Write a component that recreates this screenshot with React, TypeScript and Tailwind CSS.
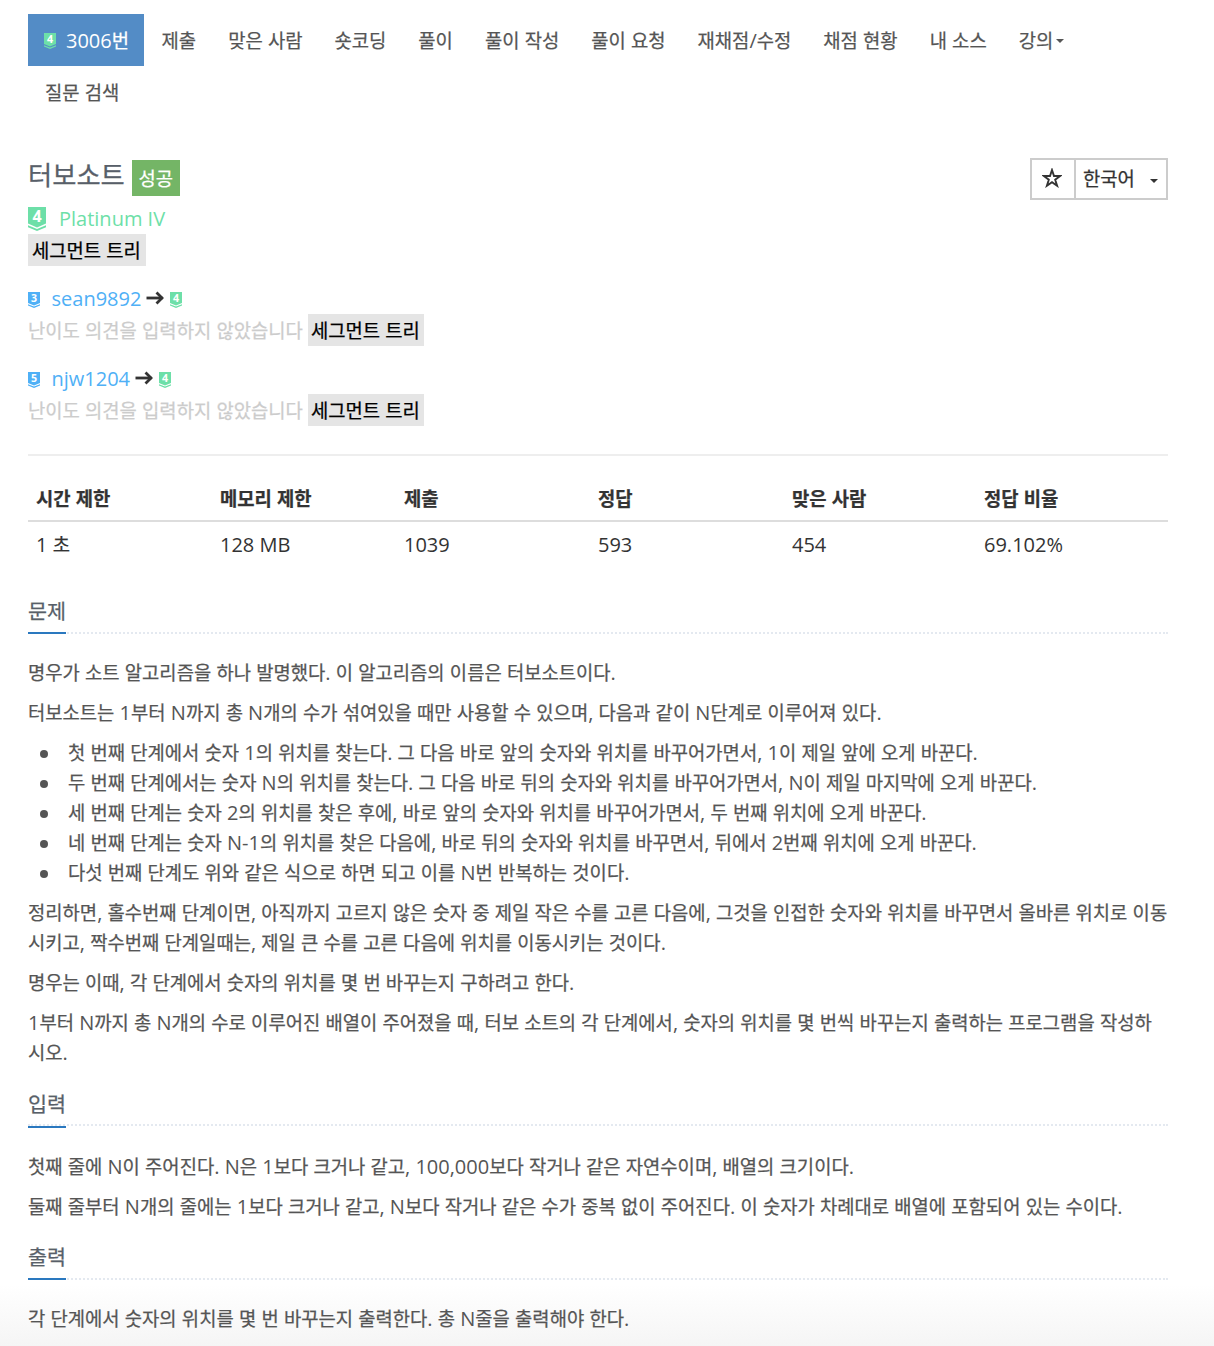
import { Fragment, type ReactNode } from 'react';

const NAV_ITEMS = [
  '제출',
  '맞은 사람',
  '숏코딩',
  '풀이',
  '풀이 작성',
  '풀이 요청',
  '재채점/수정',
  '채점 현황',
  '내 소스',
];

const STATS = [
  { label: '시간 제한', value: '1 초', width: 'w-[184px]' },
  { label: '메모리 제한', value: '128 MB', width: 'w-[184px]' },
  { label: '제출', value: '1039', width: 'w-[194px]' },
  { label: '정답', value: '593', width: 'w-[194px]' },
  { label: '맞은 사람', value: '454', width: 'w-[192px]' },
  { label: '정답 비율', value: '69.102%', width: 'w-[192px]' },
];

const OPINIONS = [
  { user: 'sean9892', level: 3 },
  { user: 'njw1204', level: 5 },
];

const STEPS = [
  '첫 번째 단계에서 숫자 1의 위치를 찾는다. 그 다음 바로 앞의 숫자와 위치를 바꾸어가면서, 1이 제일 앞에 오게 바꾼다.',
  '두 번째 단계에서는 숫자 N의 위치를 찾는다. 그 다음 바로 뒤의 숫자와 위치를 바꾸어가면서, N이 제일 마지막에 오게 바꾼다.',
  '세 번째 단계는 숫자 2의 위치를 찾은 후에, 바로 앞의 숫자와 위치를 바꾸어가면서, 두 번째 위치에 오게 바꾼다.',
  '네 번째 단계는 숫자 N-1의 위치를 찾은 다음에, 바로 뒤의 숫자와 위치를 바꾸면서, 뒤에서 2번째 위치에 오게 바꾼다.',
  '다섯 번째 단계도 위와 같은 식으로 하면 되고 이를 N번 반복하는 것이다.',
];

// Hangul is set a little smaller and firmer than the Latin text around it.
const Ko = ({ children }: { children: string }) => (
  <>
    {children.split(/([가-힣]+)/).map((run, i) =>
      i % 2 ? (
        <span
          key={i}
          className="font-['Noto_Sans_CJK_KR',sans-serif] text-[0.94em] leading-none [-webkit-text-stroke:0.25px_currentColor]"
        >
          {run}
        </span>
      ) : (
        <Fragment key={i}>{run}</Fragment>
      ),
    )}
  </>
);

const TierIcon = ({ level, className }: { level: number; className: string }) => (
  <svg viewBox="0 0 18 24" className={className} fill="currentColor">
    <path d="M0 0h18v16.6l-9 3.8-9-3.8z" />
    <path d="M0 18.2l9 3.7 9-3.7v2l-9 3.7-9-3.7z" />
    <text
      x="9"
      y="14.8"
      textAnchor="middle"
      className="fill-white font-['Open_Sans',sans-serif] text-[16px] leading-none font-bold"
    >
      {level}
    </text>
  </svg>
);

const Caret = ({ className }: { className: string }) => (
  <svg viewBox="0 0 8 4" className={className} fill="currentColor">
    <path d="M0 0h8L4 4z" />
  </svg>
);

const Arrow = () => (
  <svg viewBox="0 0 18 14" className="mb-0.5 ml-[5px] h-3.5 w-[18px] text-[#333]" fill="none" stroke="currentColor">
    <path d="M0.5 7h16" strokeWidth="2.8" />
    <path d="M10.5 1.5L16 7l-5.5 5.5" strokeWidth="2.8" />
  </svg>
);

const Tag = ({ className }: { className: string }) => (
  <span className={`h-8 bg-[#e5e5e5] pt-px leading-8 text-black ${className}`}>
    <Ko>세그먼트 트리</Ko>
  </span>
);

type SectionProps = {
  title: string;
  className: string;
  titleClass?: string;
  children: ReactNode;
};

const Section = ({ title, className, titleClass = '-mb-0.5 h-11', children }: SectionProps) => (
  <section className={className}>
    <div className="flex h-11 border-b-2 border-dotted border-[#e4e9f0]">
      <h2 className={`border-b-2 border-[#2a78bf] text-[22px] leading-10 text-[#585f69] ${titleClass}`}>
        <Ko>{title}</Ko>
      </h2>
    </div>
    <div className="space-y-2.5 pt-6 leading-[30px] text-[#555]">{children}</div>
  </section>
);

const P = ({ children }: { children: string }) => (
  <p>
    <Ko>{children}</Ko>
  </p>
);

export default function App() {
  return (
    <div className="h-[1346px] overflow-hidden bg-white bg-[linear-gradient(to_bottom,#fff_1285px,#f5f5f5_1346px)] pt-3.5 pl-7 font-['Open_Sans','Noto_Sans_CJK_KR',sans-serif] text-[20px] text-[#333]">
      <div className="w-[1140px]">
        <nav className="flex h-[104px] flex-wrap leading-[54px] text-[#555]">
          <a className="mr-[1.6px] flex h-[52px] w-[116px] items-center bg-[#538cc6] pl-4 text-white">
            <TierIcon level={4} className="mt-0.5 mr-2.5 h-4 w-3 text-[#6ddfa8]" />
            <span className="mt-0.5">
              <Ko>3006번</Ko>
            </span>
          </a>
          {NAV_ITEMS.map((item) => (
            <a key={item} className="h-[52px] px-4">
              <Ko>{item}</Ko>
            </a>
          ))}
          <a className="flex h-[52px] items-center px-4">
            <span className="mt-0.5">
              <Ko>강의</Ko>
            </span>
            <Caret className="mt-0.5 ml-[3px] h-1 w-2" />
          </a>
          <div className="h-[52px] w-full pl-[17px]">
            <Ko>질문 검색</Ko>
          </div>
        </nav>

        <header className="mt-10 flex h-[45px] justify-between">
          <div className="flex">
            <h1 className="mr-[7px] text-[28px] leading-8 text-[#585f69]">
              <Ko>터보소트</Ko>
            </h1>
            <span className="mt-0.5 h-9 w-12 bg-[#74b566] text-center leading-[38px] text-white">
              <Ko>성공</Ko>
            </span>
          </div>
          <div className="flex h-[42px] border-2 border-[#ccc] leading-[38px]">
            <button className="flex w-[44px] items-center justify-center border-r-2 border-[#ccc] pr-0.5 pb-0.5">
              <svg viewBox="0 0 20 20" className="size-5" fill="none" stroke="currentColor" strokeWidth="1.9">
                <path d="M10 2l2 6h6.2l-5 3.7 1.9 6-5.1-3.6-5.1 3.6 1.9-6-5-3.7H8z" />
              </svg>
            </button>
            <button className="flex w-[90px] items-center pl-[7px]">
              <span className="-mt-px">
                <Ko>한국어</Ko>
              </span>
              <Caret className="mt-[3px] ml-[15px] h-1 w-2" />
            </button>
          </div>
        </header>

        <div className="flex h-[31px] items-center leading-8 text-[#6ddfa8]">
          <TierIcon level={4} className="mt-px mr-[13px] h-6 w-[18px]" />
          Platinum IV
        </div>
        <Tag className="block w-[118px] pl-1" />

        {OPINIONS.map(({ user, level }) => (
          <div key={user} className="mt-4 h-16 leading-8">
            <div className="flex h-8 items-center pt-0.5 text-[#4fb0f6]">
              <TierIcon level={level} className="mt-0.5 mr-[11.5px] h-4 w-3" />
              {user}
              <Arrow />
              <TierIcon level={4} className="mt-0.5 ml-[5.5px] h-4 w-3 text-[#6ddfa8]" />
            </div>
            <div className="flex">
              <span className="w-[280px] pt-px text-[#ccc]">
                <Ko>난이도 의견을 입력하지 않았습니다</Ko>
              </span>
              <Tag className="w-[116px] pl-[3px]" />
            </div>
          </div>
        ))}

        <hr className="mt-7 border-t-2 border-[#eee]" />

        <table className="mt-5 w-full table-fixed text-left">
          <thead>
            <tr className="h-[45px] border-b-2 border-[#ddd]">
              {STATS.map(({ label, width }) => (
                <th key={label} className={`pt-px pl-2 font-bold ${width}`}>
                  <Ko>{label}</Ko>
                </th>
              ))}
            </tr>
          </thead>
          <tbody>
            <tr className="h-[46px]">
              {STATS.map(({ label, value }) => (
                <td key={label} className="pl-2">
                  <Ko>{value}</Ko>
                </td>
              ))}
            </tr>
          </tbody>
        </table>

        <Section title="문제" className="mt-[23px]">
          <P>명우가 소트 알고리즘을 하나 발명했다. 이 알고리즘의 이름은 터보소트이다.</P>
          <P>터보소트는 1부터 N까지 총 N개의 수가 섞여있을 때만 사용할 수 있으며, 다음과 같이 N단계로 이루어져 있다.</P>
          <ul>
            {STEPS.map((step) => (
              <li key={step} className="flex items-center whitespace-nowrap">
                <span className="mt-px mr-5 ml-3 size-2 rounded-full bg-[#555]" />
                <span>
                  <Ko>{step}</Ko>
                </span>
              </li>
            ))}
          </ul>
          <P>
            정리하면, 홀수번째 단계이면, 아직까지 고르지 않은 숫자 중 제일 작은 수를 고른 다음에, 그것을 인접한 숫자와 위치를 바꾸면서 올바른 위치로 이동시키고, 짝수번째 단계일때는, 제일 큰 수를 고른 다음에 위치를 이동시키는 것이다.
          </P>
          <P>명우는 이때, 각 단계에서 숫자의 위치를 몇 번 바꾸는지 구하려고 한다.</P>
          <P>
            1부터 N까지 총 N개의 수로 이루어진 배열이 주어졌을 때, 터보 소트의 각 단계에서, 숫자의 위치를 몇 번씩 바꾸는지 출력하는 프로그램을 작성하시오.
          </P>
        </Section>

        {/* the blue rule sits just under the dotted one here */}
        <Section title="입력" className="mt-3.5" titleClass="-mb-1 h-[46px] pt-px">
          <div className="space-y-2.5 pt-0.5">
            <P>첫째 줄에 N이 주어진다. N은 1보다 크거나 같고, 100,000보다 작거나 같은 자연수이며, 배열의 크기이다.</P>
            <P>둘째 줄부터 N개의 줄에는 1보다 크거나 같고, N보다 작거나 같은 수가 중복 없이 주어진다. 이 숫자가 차례대로 배열에 포함되어 있는 수이다.</P>
          </div>
        </Section>

        <Section title="출력" className="mt-3.5">
          <P>각 단계에서 숫자의 위치를 몇 번 바꾸는지 출력한다. 총 N줄을 출력해야 한다.</P>
        </Section>
      </div>
    </div>
  );
}
